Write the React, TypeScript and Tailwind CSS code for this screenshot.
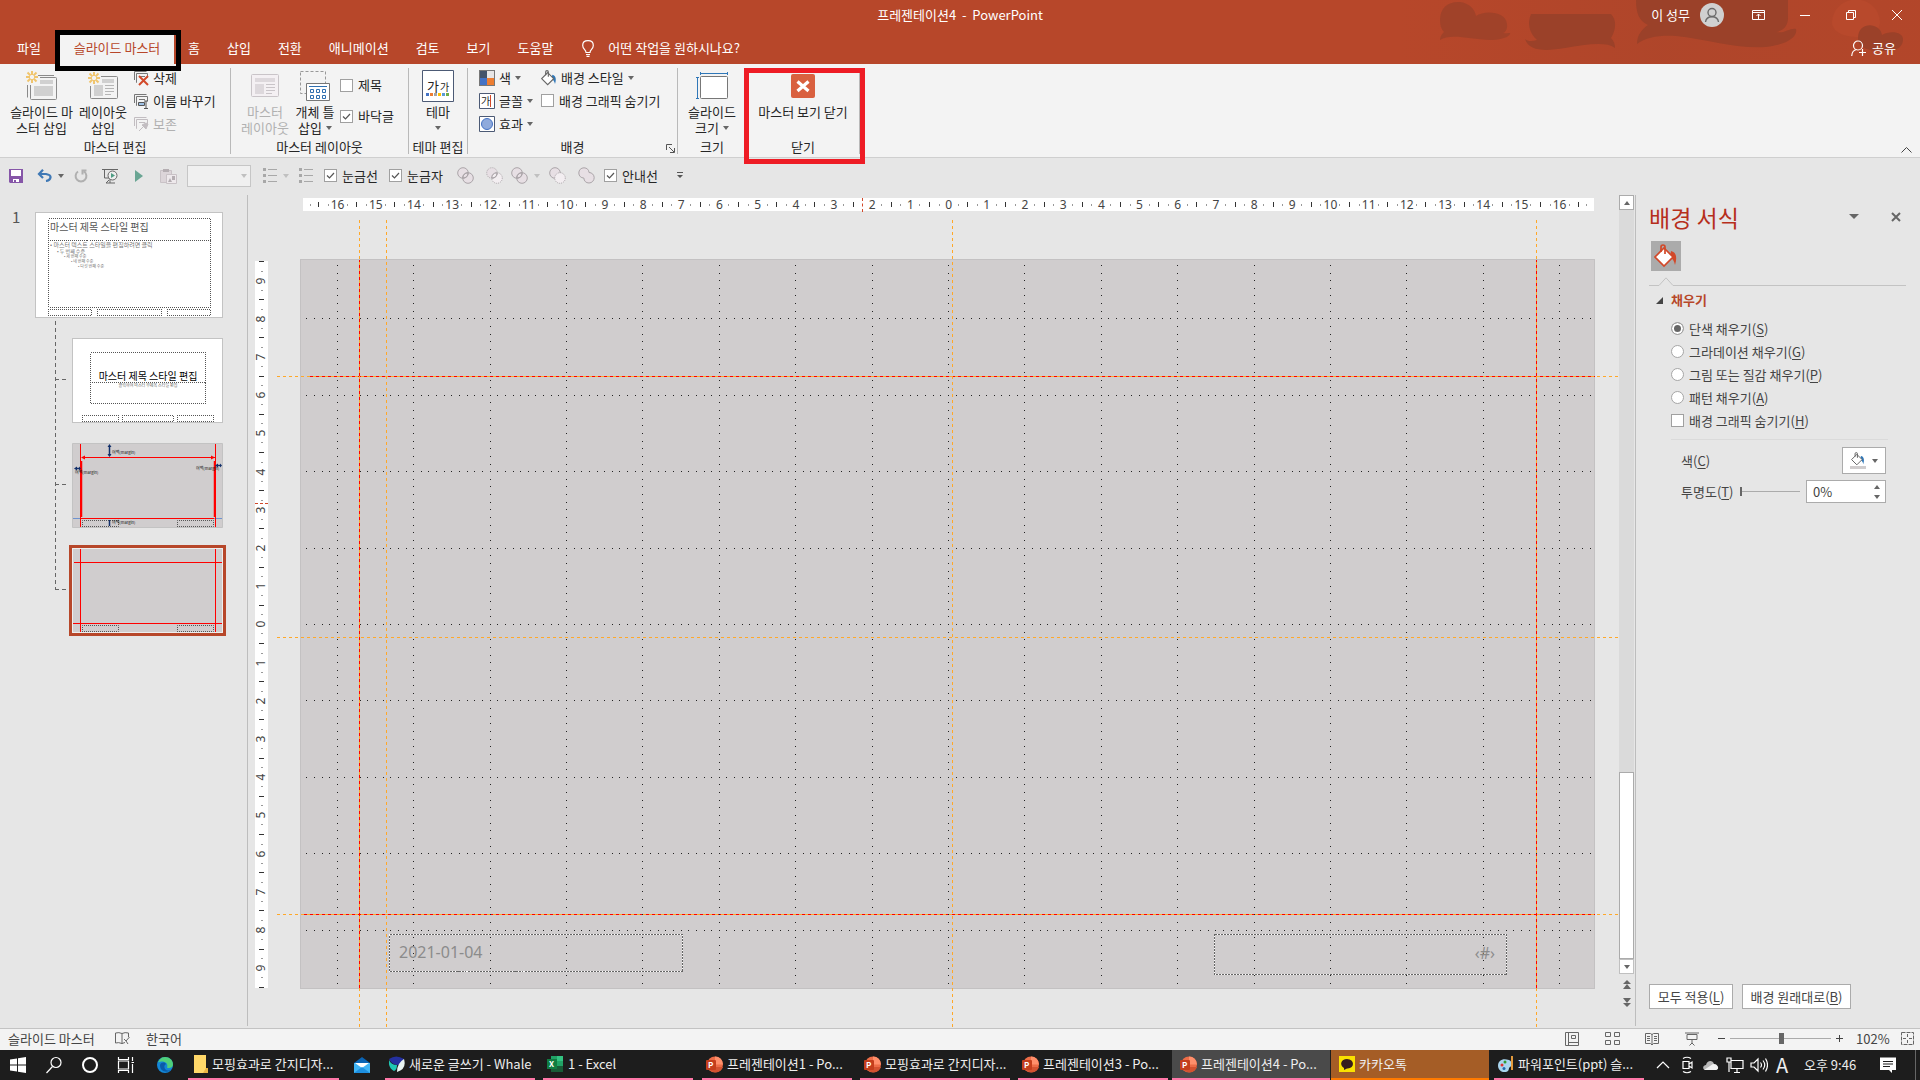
import React from 'react';
import clsx from 'clsx';

type Kids = { children?: React.ReactNode };

/* ---------- Small shared pieces ---------- */

function Caret({ className = 'text-[#666]' }: { className?: string }) {
  return (
    <svg width="6" height="4" viewBox="0 0 6 4" className={clsx('shrink-0', className)}>
      <path d="M0 0h6L3 4z" fill="currentColor" />
    </svg>
  );
}

function Check({ label, checked, className }: { label: React.ReactNode; checked?: boolean; className?: string }) {
  return (
    <label className={clsx('flex items-center gap-[5px] whitespace-nowrap', className)}>
      <span className="grid shrink-0">
        <input
          type="checkbox"
          defaultChecked={checked}
          className="peer col-start-1 row-start-1 h-[13px] w-[13px] appearance-none border border-[#a0a0a0] bg-white"
        />
        <svg viewBox="0 0 13 13" className="pointer-events-none col-start-1 row-start-1 hidden h-[13px] w-[13px] peer-checked:block">
          <path d="M3 6.5l2.5 2.5L10 4" fill="none" stroke="#555" strokeWidth="1.2" />
        </svg>
      </span>
      {label}
    </label>
  );
}

function Key({ k }: { k: string }) {
  return <>(<span className="underline underline-offset-2">{k}</span>)</>;
}

/* ---------- Title bar and tabs ---------- */

function HeaderArt() {
  return (
    <svg className="pointer-events-none absolute top-0 right-0" width="520" height="64" viewBox="0 0 520 64" fill="#9b4129">
      <defs>
        <linearGradient id="haze" x1="0" x2="1">
          <stop offset="0" stopColor="#a8442a" stopOpacity="0" />
          <stop offset="0.5" stopColor="#a8442a" stopOpacity="0.5" />
          <stop offset="1" stopColor="#a8442a" stopOpacity="0.3" />
        </linearGradient>
      </defs>
      <path d="M0 0h520v64H0z" fill="url(#haze)" />
      <path d="M40 20c0-13 9-19 20-18 9 1 15 7 16 14 8-6 30-5 31 8 1 6-3 9-4 9 5 1 8-1 7 1-2 4-12 6-20 6-20-1-40-7-50 0 0-5 4-8 4-8-3-3-4-7-4-12z" opacity=".8" />
      <path d="M131 14h80c6 6 5 16 0 24 3 3 4 6 4 10-10-7-30-3-50 0-18 3-36 4-40-9 3 3 8 2 12 1-8-7-10-17-6-26z" />
      <path d="M236 0h152v18c0 8-5 13-12 14 8 2 15-5 20-3 2 8-10 16-30 18-30 2-60-8-90-11-16-1-30 1-39 8 0-9 5-15 11-19-9-4-12-12-12-25z" />
      <path d="M432 22c2-30 46-30 48 0-1 12-10 15-22 15-14 0-26-5-26-15z" fill="#b8492c" />
      <path d="M458 38c0-17 22-16 24-3 8-5 22-3 21 5-1 11-12 11-22 11-12 0-23-3-23-13z" />
    </svg>
  );
}

function WinButton({ label, children }: Kids & { label: string }) {
  return (
    <button aria-label={label} className="flex h-[30px] w-[46px] items-center justify-center">
      <svg width="14" height="14" viewBox="0 0 14 14" fill="none" stroke="white">{children}</svg>
    </button>
  );
}

function TitleBar() {
  return (
    <header className="relative bg-[#b7472a] text-white">
      <HeaderArt />
      <div className="relative grid h-[30px] grid-cols-[1fr_auto_1fr] items-center">
        <span />
        <h1 className="text-[13px]">프레젠테이션4&nbsp; - &nbsp;PowerPoint</h1>
        <div className="flex items-center justify-end">
          <span className="mr-[10px]">이 성무</span>
          <svg width="24" height="24" viewBox="0 0 24 24" className="mr-3" fill="none" stroke="#6a6a6a" strokeWidth="1.4">
            <circle cx="12" cy="12" r="12" fill="#d0d0d0" stroke="none" />
            <circle cx="12" cy="9.500" r="4" />
            <path d="M5.500 19c1-7 12-7 13 0" />
          </svg>
          <WinButton label="리본 메뉴 표시 옵션">
            <path d="M.5 2.500h12v9H.5zM.5 4.500h12M6.500 11V6M4.500 8l2-2 2 2" />
          </WinButton>
          <WinButton label="최소화"><path d="M2 7.500h10" /></WinButton>
          <WinButton label="이전 크기로"><path d="M2.500 4.500h7v7h-7zM4.500 4V2.500h7v7H10" /></WinButton>
          <WinButton label="닫기"><path d="M2 2l10 10M12 2L2 12" /></WinButton>
        </div>
      </div>
      <nav className="relative flex h-[34px] items-end">
        <button className="h-[30px] w-[60px] pb-[2px] pl-[17px] text-left">파일</button>
        <div className="relative">
          <button className="h-[30px] w-[114px] bg-[#f3f3f3] pb-[2px] text-[#b7472a]">슬라이드 마스터</button>
          <div className="pointer-events-none absolute -top-1 -right-[7px] -bottom-[7px] -left-[5px] z-10 border-[5px] border-black" />
        </div>
        <div className="flex gap-px pl-px">
          {['홈', '삽입', '전환', '애니메이션', '검토', '보기', '도움말'].map((t) => (
            <button key={t} className="h-[30px] px-[13px] pb-[2px]">{t}</button>
          ))}
        </div>
        <button className="flex h-[30px] items-center gap-[14px] pb-[2px] pl-4">
          <svg width="12" height="17" viewBox="0 0 12 17" fill="none" stroke="white" strokeWidth="1.2">
            <path d="M4 12.500c0-3-3.300-3.500-3.300-7C.7 2.500 3 .7 6 .7s5.300 1.800 5.300 4.800c0 3.500-3.300 4-3.300 7zM4 14.500h4M4.500 16.300h3" />
          </svg>
          어떤 작업을 원하시나요?
        </button>
        <button className="mr-6 ml-auto flex h-[30px] items-center gap-[6px] pb-[2px]">
          <svg width="15" height="17" viewBox="0 0 15 17" fill="none" stroke="white" strokeWidth="1.2">
            <circle cx="7" cy="5.500" r="4.500" />
            <path d="M.7 16c.3-4 2-6 4.800-6.500M11.500 9v7M8 12.500h7" />
          </svg>
          공유
        </button>
      </nav>
    </header>
  );
}

/* ---------- Ribbon ---------- */

function Group({ label, width, children, launcher, last }: Kids & { label: string; width: string; launcher?: boolean; last?: boolean }) {
  return (
    <section className={clsx('relative flex h-[86px] shrink-0 flex-col border-r border-[#b9b9b9]', width)}>
      <div className="flex h-[72px]">{children}</div>
      <h2 className="text-center leading-[14px]">{label}</h2>
      {launcher && (
        <button aria-label="배경 서식" className="absolute right-[2px] bottom-px">
          <svg width="9" height="9" viewBox="0 0 9 9" fill="none" stroke="#555">
            <path d="M.5 6V.5H6M3 3l5 5M8.500 4v4.500H4" />
          </svg>
        </button>
      )}
      {last && <div className="pointer-events-none absolute top-0 -right-[6px] -bottom-[10px] -left-[3px] border-[5px] border-[#ee1c25]" />}
    </section>
  );
}

function Big({ icon, lines, width, caret, muted }: { icon: React.ReactNode; lines: string[]; width: string; caret?: boolean; muted?: boolean }) {
  return (
    <button className={clsx('flex flex-col items-center leading-4 whitespace-nowrap', width, muted && 'text-[#b1b1b1]')}>
      <span className="flex h-9 items-center">{icon}</span>
      {lines.map((l, i) => (
        <span key={l} className="flex h-4 items-center gap-1">
          {l}
          {caret && i === lines.length - 1 && <Caret />}
        </span>
      ))}
    </button>
  );
}

function Small({ icon, label, caret, muted }: { icon: React.ReactNode; label: string; caret?: boolean; muted?: boolean }) {
  return (
    <button className={clsx('flex h-[21px] items-center gap-1 whitespace-nowrap', muted && 'text-[#b1b1b1]')}>
      {icon}
      {label}
      {caret && <Caret />}
    </button>
  );
}

const Spark = () => <path d="M6 0v4M6 8v4M0 6h4M8 6h4M1.500 1.500l3 3M7.500 7.500l3 3M10.500 1.500l-3 3M4.500 7.500l-3 3" stroke="#f0c56e" strokeWidth="2" />;

const InsertMasterIcon = () => (
  <svg width="32" height="30" viewBox="0 0 32 30" fill="none" stroke="#8a8a8a">
    <path d="M1.500 14v12.500M12 4.500h16M4.500 14v13.500q0 1 1 1h24q1 0 1-1v-20q0-1-1-1H14" />
    <path d="M14 9h13v4H14zM8 15h19v10H8z" fill="#d0d0d0" stroke="none" />
    <Spark />
  </svg>
);

const InsertLayoutIcon = () => (
  <svg width="30" height="28" viewBox="0 0 30 28" fill="none" stroke="#8a8a8a">
    <path d="M2.500 14v11.500q0 1 1 1h25q1 0 1-1v-20q0-1-1-1H13" />
    <path d="M14 7h12v4H14zM6 13h9v11H6z" fill="#d0d0d0" stroke="none" />
    <path d="M17 13.500h9M17 16.500h9M17 19.500h9M17 22.500h6" stroke="#b5b5b5" />
    <Spark />
  </svg>
);

const MasterLayoutIcon = () => (
  <svg width="28" height="24" viewBox="0 0 28 24" fill="none" stroke="#c9c4c8">
    <rect x=".5" y=".5" width="27" height="22" rx="1" fill="#f4f0f3" />
    <path d="M4 4h20v4H4zM4 10h9v10H4z" fill="#ddd8dc" stroke="none" />
    <path d="M15 10.500h9M15 13.500h9M15 16.500h9M15 19.500h6" />
  </svg>
);

const PlaceholderIcon = () => (
  <svg width="30" height="31" viewBox="0 0 30 31" fill="none">
    <path d="M.5.5h25v22H.5z" stroke="#999" strokeDasharray="3 2" />
    <path d="M6.500 12.500h23v17h-23z" fill="white" stroke="#777" />
    <path d="M9 15.500h18" stroke="#2f6fb0" />
    <path d="M10.500 18.500h3v3h-3zM16.500 18.500h3v3h-3zM22.500 18.500h3v3h-3zM10.500 24.500h3v3h-3zM16.500 24.500h3v3h-3zM22.500 24.500h3v3h-3z" stroke="#2f6fb0" />
  </svg>
);

const ThemeIcon = () => (
  <svg width="32" height="32" viewBox="0 0 32 32">
    <path d="M.5.500h31v31H.5z" fill="white" stroke="#4c5a75" />
    <text x="5" y="21" fontSize="13" fill="#222">가</text>
    <text x="18" y="21" fontSize="10" fill="#222">가</text>
    {['#4472c4', '#ed7d31', '#a5a5a5', '#ffc000', '#5b9bd5', '#70ad47'].map((c, i) => (
      <rect key={c} x={4 + i * 4} y="23" width="3" height="3" fill={c} />
    ))}
  </svg>
);

const SlideSizeIcon = () => (
  <svg width="32" height="28" viewBox="0 0 32 28" fill="none" stroke="#2f77b8">
    <path d="M4.500 1.500h27M4.500 0v3M31.500 0v3M1.500 5v22M0 5.500h3M0 26.500h3" />
    <rect x="4.500" y="4.500" width="27" height="22" rx="1" fill="white" stroke="#777" />
  </svg>
);

const CloseMasterIcon = () => (
  <svg width="24" height="24" viewBox="0 0 24 24">
    <rect width="24" height="24" rx="2" fill="#d9603f" />
    <path d="M6.500 7.500l11 9.500M17.500 7.500l-11 9.500" stroke="white" strokeWidth="3.200" />
  </svg>
);

function PageIcon({ kind }: { kind: 'delete' | 'rename' | 'keep' }) {
  const c = kind === 'keep' ? '#c2bdc1' : '#777';
  return (
    <svg width="15" height="16" viewBox="0 0 15 16" fill="none" stroke={c}>
      <path d="M.5 10V1.500h12M3 12.500h-.5v-9h11V8M5 6.500h6" />
      {kind === 'delete' && <path d="M5 6l9 9M14 6l-9 9" stroke="#d2492a" strokeWidth="2" />}
      {kind === 'rename' && <path d="M4.500 9.500h6v3h-6zM10 8h4M12 8v7M10 15.500h4" fill="#9ec0e4" stroke="#555" />}
      {kind === 'keep' && <path d="M5 15l4-4M8 9l4 4 2-5-2-1z" fill={c} />}
    </svg>
  );
}

const Bucket = ({ accent = '#2f77b8', line = '#666', size = 16 }) => (
  <svg width={size} height={size} viewBox="0 0 24 24" fill="none" stroke={line} strokeWidth="1.700">
    <path d="M17 7c6 1 6 8 4 14-1-4-2-6-5-8z" fill={accent} stroke="none" />
    <path d="M10 4l9 9-9 9-9-9z" fill="white" />
    <path d="M7 8V3q0-2 2-2t2 2v7" />
  </svg>
);

function Ribbon() {
  return (
    <div className="relative flex h-[94px] border-b border-[#cfcfcf] bg-[#f3f3f3] pt-1 text-[#262626]">
      <Group label="마스터 편집" width="w-[231px]">
        <Big width="ml-2 w-[67px]" icon={<InsertMasterIcon />} lines={['슬라이드 마', '스터 삽입']} />
        <Big width="w-[56px]" icon={<InsertLayoutIcon />} lines={['레이아웃', '삽입']} />
        <div className="-mt-px flex flex-col gap-[2px] pl-[3px]">
          <Small icon={<PageIcon kind="delete" />} label="삭제" />
          <Small icon={<PageIcon kind="rename" />} label="이름 바꾸기" />
          <Small icon={<PageIcon kind="keep" />} label="보존" muted />
        </div>
      </Group>
      <Group label="마스터 레이아웃" width="w-[178px]">
        <Big width="ml-[9px] w-[50px]" icon={<MasterLayoutIcon />} lines={['마스터', '레이아웃']} muted />
        <Big width="w-[50px]" icon={<PlaceholderIcon />} lines={['개체 틀', '삽입']} caret />
        <div className="flex flex-col pt-px">
          <Check label="제목" className="h-8" />
          <Check label="바닥글" checked className="h-[30px]" />
        </div>
      </Group>
      <Group label="테마 편집" width="w-[59px]">
        <Big width="w-full" icon={<ThemeIcon />} lines={['테마', '']} caret />
      </Group>
      <Group label="배경" width="w-[210px]" launcher>
        <div className="-mt-px ml-[11px] flex w-[62px] flex-col gap-[2px]">
          <Small
            label="색"
            caret
            icon={
              <svg width="16" height="16" viewBox="0 0 16 16">
                <path d="M0 0h16v16H0z" fill="#777" />
                <path d="M1 1h7v7H1z" fill="#44546a" />
                <path d="M8 1h7v7H8z" fill="#e7e6e6" />
                <path d="M1 8h7v7H1z" fill="#4472c4" />
                <path d="M8 8h7v7H8z" fill="#ed7d31" />
              </svg>
            }
          />
          <Small
            label="글꼴"
            caret
            icon={
              <svg width="16" height="16" viewBox="0 0 16 16">
                <path d="M.5.500h15v15H.5z" fill="white" stroke="#4c5a75" />
                <text x="2" y="12" fontSize="10" fill="#222">가</text>
                <path d="M11.500 2v12" stroke="#d2492a" />
              </svg>
            }
          />
          <Small
            label="효과"
            caret
            icon={
              <svg width="16" height="16" viewBox="0 0 16 16">
                <path d="M.5.500h15v15H.5z" fill="white" stroke="#4c5a75" />
                <circle cx="8" cy="8" r="5.500" fill="#8faadc" stroke="#4472c4" />
              </svg>
            }
          />
        </div>
        <div className="-mt-px flex flex-col gap-[2px]">
          <Small icon={<Bucket />} label="배경 스타일" caret />
          <Check label="배경 그래픽 숨기기" className="h-[21px]" />
        </div>
      </Group>
      <Group label="크기" width="w-[69px]">
        <Big width="w-full" icon={<SlideSizeIcon />} lines={['슬라이드', '크기']} caret />
      </Group>
      <Group label="닫기" width="w-[113px]" last>
        <Big width="w-full" icon={<CloseMasterIcon />} lines={['마스터 보기 닫기']} />
      </Group>
      <button aria-label="리본 메뉴 축소" className="mr-2 mb-1 ml-auto self-end">
        <svg width="11" height="6" viewBox="0 0 11 6" fill="none" stroke="#444"><path d="M.5 5.500l5-5 5 5" /></svg>
      </button>
    </div>
  );
}

/* ---------- Quick access bar ---------- */

function Tool({ label, width, children }: Kids & { label: string; width: string }) {
  return (
    <button aria-label={label} className={clsx('flex shrink-0 items-center gap-[6px]', width)}>{children}</button>
  );
}

function Rings({ kind }: { kind: number }) {
  return (
    <svg width="17" height="17" viewBox="0 0 17 17" fill="#e7dfe4" stroke="#aaa4a8">
      {kind === 3 ? (
        <path d="M6 .8C9 .8 11 3 11 5.500c3 0 5.200 2.500 5.200 5.200S14 16 11 16s-5-2-5.200-5C3 11 .8 9 .8 6S3 .8 6 .8z" />
      ) : (
        <>
          <circle cx="6" cy="6" r="5.300" strokeDasharray={kind === 1 ? '1 1' : undefined} />
          <circle cx="11" cy="11" r="5.300" strokeDasharray={kind ? '1 1' : undefined} fill={kind ? '#f3eef1' : '#e7dfe4'} />
          {kind < 2 && <path d="M11 5.700Q11 11 5.700 11Q6 6 11 5.700zM11.300 6A5.300 5.300 0 0 1 6 11.300" fill="none" />}
        </>
      )}
    </svg>
  );
}

const ListIcon = () => (
  <svg width="14" height="15" viewBox="0 0 14 15" stroke="#a8a8a8">
    <path d="M5 1.500h9M5 7.500h9M5 13.500h9" />
    <path d="M0 1.500h3M0 7.500h3M0 13.500h3" strokeWidth="3" />
  </svg>
);

function QuickBar() {
  return (
    <div className="flex h-[37px] items-center pb-[2px] pl-[9px] text-[#262626]">
      <Tool label="저장" width="w-[28px]">
        <svg width="14" height="14" viewBox="0 0 14 14">
          <path d="M0 0h14v14H1l-1-1z" fill="#8656a8" />
          <path d="M2 1h10v6H2zM4 10h6v3H7v-2H5v2H4z" fill="white" />
        </svg>
      </Tool>
      <Tool label="실행 취소" width="w-[37px]">
        <svg width="15" height="13" viewBox="0 0 15 13" fill="none" stroke="#3f78b5" strokeWidth="2.200">
          <path d="M6 .8L2 5l4 4M2 5h7q5 1 4.500 3.500-.5 3-4.500 3.500" />
        </svg>
        <Caret />
      </Tool>
      <Tool label="다시 실행" width="w-[28px]">
        <svg width="14" height="14" viewBox="0 0 14 14" fill="none" stroke="#b0b0b0" strokeWidth="2">
          <path d="M4 2.500A5.400 5.400 0 1 0 10 2.500M8.500 5.500V1.500h4" />
        </svg>
      </Tool>
      <Tool label="슬라이드 쇼" width="w-[33px]">
        <svg width="17" height="16" viewBox="0 0 17 16" fill="none" stroke="#666">
          <path d="M0 1.500h16M2.500 2v8H7M7 12l-3 3h9M8 10v5" />
          <circle cx="10.500" cy="7.500" r="4.500" fill="#eee" />
          <path d="M9 5l4 2.500L9 10z" fill="#4f9c84" stroke="none" />
        </svg>
      </Tool>
      <Tool label="재생" width="w-[25px]">
        <svg width="8" height="12" viewBox="0 0 8 12"><path d="M0 0l8 6-8 6z" fill="#69a593" /></svg>
      </Tool>
      <Tool label="붙여넣기" width="w-[27px]">
        <svg width="17" height="16" viewBox="0 0 17 16" fill="#dcd5d9" stroke="#c9c2c6">
          <path d="M.5 2.500h11v12H.5z" />
          <path d="M3 1h6v3H3z" fill="#b5aeb2" stroke="none" />
          <path d="M6.500 6.500h10v9h-10z" fill="#eee9ec" />
          <path d="M8 14l2-4 2 4zM12 8h3v4h-3z" fill="#b5aeb2" stroke="none" />
        </svg>
      </Tool>
      <div className="mr-3 grid shrink-0 items-center">
        <select aria-label="글꼴 크기" className="col-start-1 row-start-1 h-[22px] w-16 appearance-none border border-[#c6c6c6] bg-[#f0f0f0]" />
        <Caret className="pointer-events-none col-start-1 row-start-1 mr-1 justify-self-end text-[#c0c0c0]" />
      </div>
      <Tool label="글머리 기호" width="w-[36px]"><ListIcon /><Caret className="text-[#c0c0c0]" /></Tool>
      <Tool label="목록" width="w-[25px]"><ListIcon /></Tool>
      <Check label="눈금선" checked className="w-[65px]" />
      <Check label="눈금자" checked className="w-[68px]" />
      <Tool label="도형 병합" width="w-[29px]"><Rings kind={0} /></Tool>
      <Tool label="도형 교차" width="w-[25px]"><Rings kind={1} /></Tool>
      <Tool label="도형 결합" width="w-[38px]"><Rings kind={0} /><Caret className="text-[#c0c0c0]" /></Tool>
      <Tool label="도형 빼기" width="w-[29px]"><Rings kind={2} /></Tool>
      <Tool label="도형 통합" width="w-[26px]"><Rings kind={3} /></Tool>
      <Check label="안내선" checked className="w-[73px]" />
      <button aria-label="빠른 실행 도구 모음 사용자 지정">
        <svg width="6" height="7" viewBox="0 0 6 7" fill="#555"><path d="M0 0h6v1H0zM0 3h6L3 6z" /></svg>
      </button>
    </div>
  );
}

/* ---------- Thumbnails ---------- */

const dotted = { fill: 'none', stroke: '#555', strokeDasharray: '1 1' };

function Margin({ x, y }: { x: number; y: number }) {
  return <text x={x} y={y} fontSize="4" fill="#111">여백(margin)</text>;
}

function Thumbnails() {
  return (
    <aside className="mb-[2px] flex w-[248px] shrink-0 border-r border-[#bdbdbd] pt-[17px]">
      <span className="w-[35px] shrink-0 pl-3 text-[15px] leading-[10px] text-[#555]">1</span>
      <div>
        <button aria-label="슬라이드 마스터" className="block">
          <svg width="188" height="106" viewBox="0 0 188 106" shapeRendering="crispEdges">
            <path d="M.5.500h187v105H.5z" fill="white" stroke="#c3c3c3" />
            <path d="M13.500 6.500h162v22h-162zM13.500 28v67h162V28M13.500 104V97.500h43v6h-43M62.500 104V97.500h64v6h-64M132.500 104V97.500h43v6h-43" {...dotted} />
            <text x="15" y="19" fontSize="10" fill="#555">마스터 제목 스타일 편집</text>
            <g fill="#777" fontSize="6">
              <text x="15" y="35">• 마스터 텍스트 스타일을 편집하려면 클릭</text>
              <text x="22" y="41" fontSize="5">• 두 번째 수준</text>
              <text x="29" y="46" fontSize="4">• 세 번째 수준</text>
              <text x="36" y="51" fontSize="4">• 네 번째 수준</text>
              <text x="43" y="56" fontSize="4">• 다섯 번째 수준</text>
            </g>
          </svg>
        </button>
        <div className="flex pt-[3px] pl-5">
          <svg width="14" height="270" viewBox="0 0 14 270" fill="none" stroke="#666" strokeDasharray="4 3" shapeRendering="crispEdges" className="shrink-0">
            <path d="M.5 0v268M0 58.500h14M0 163.500h14M0 268.500h14" />
          </svg>
          <div className="flex flex-col items-center pt-[17px]">
            <button aria-label="제목 슬라이드 레이아웃" className="mb-5">
              <svg width="151" height="85" viewBox="0 0 151 85" className="block" shapeRendering="crispEdges">
                <path d="M.5.500h150v84H.5z" fill="white" stroke="#c3c3c3" />
                <path d="M18.500 14.500h115v30h-115zM18.500 44v21.500h115V44M10.500 84V77.500h36v6h-36M50.500 84V77.500h51v6h-51M105.500 84V77.500h36v6h-36" {...dotted} />
                <text x="76" y="42" fontSize="10" fill="#000" textAnchor="middle">마스터 제목 스타일 편집</text>
                <text x="76" y="49" fontSize="4" fill="#666" textAnchor="middle">클릭하여 마스터 부제목 스타일 편집</text>
              </svg>
            </button>
            <button aria-label="여백 안내 레이아웃" className="mb-[17px]">
              <svg width="151" height="85" viewBox="0 0 151 85" className="block">
                <path d="M.5.500h150v84H.5z" fill="#d0cdce" stroke="#c3c3c3" />
                <path d="M1 75.500h149" stroke="#6f93cf" />
                <path d="M10.500 84V77.500h36v6h-36M105.500 84V77.500h36v6h-36" {...dotted} />
                <path d="M8.500 1v83M143.500 1v83M10 14.500h133M9 75.500h133" stroke="#f00" />
                <path d="M9.500 18v56M142.500 18v56" stroke="#f00" strokeWidth="1.500" />
                <path d="M9 14.500l4-2v4zM143 14.500l-4-2v4z" fill="#f00" />
                <path d="M37.500 3v10M37.500 77v6M4 25.500h3M146 22.500h3" stroke="#12306b" strokeWidth="1.500" />
                <path d="M35.500 4l2-3 2 3zM35.500 11l2 3 2-3zM5 23.500l-3 2 3 2zM7 23.500l2 2-2 2zM146 20.500l-3 2 3 2zM148 20.500l2 2-2 2z" fill="#12306b" />
                <Margin x={40} y={11} />
                <Margin x={3} y={31} />
                <Margin x={124} y={27} />
                <Margin x={40} y={81} />
              </svg>
            </button>
            <button aria-label="선택한 레이아웃" aria-current="true" className="border-[3px] border-[#b7472a]">
              <svg width="151" height="85" viewBox="0 0 151 85" className="block">
                <path d="M.5.500h150v84H.5z" fill="#d0cdce" stroke="#eee" />
                <path d="M10.500 84V77.500h36v6h-36M105.500 84V77.500h36v6h-36" {...dotted} />
                <path d="M8.500 1v83M143.500 1v83M2 14.500h148M1 75.500h149" stroke="#f00" />
              </svg>
            </button>
          </div>
        </div>
      </div>
    </aside>
  );
}

/* ---------- Rulers and slide ---------- */

const range = (n: number) => Array.from({ length: n * 2 + 1 }, (_, i) => i - n);

function Ruler({ size, vertical }: { size: number; vertical?: boolean }) {
  const dot = <i className={clsx('shrink-0 bg-[#999]', vertical ? 'h-px w-[2px]' : 'h-[2px] w-px')} />;
  const tick = <i className={clsx('shrink-0 bg-[#333]', vertical ? 'h-px w-[5px]' : 'h-[5px] w-px')} />;
  return (
    <div
      className={clsx(
        "flex items-center bg-white font-['Noto_Sans',sans-serif] text-[12px] text-[#444]",
        vertical ? 'w-[13px] flex-col' : 'h-[13px] w-full',
      )}
    >
      {!vertical && <span className="flex w-[15px] shrink-0 justify-center">{dot}</span>}
      {tick}
      {range(size).map((n) => (
        <React.Fragment key={n}>
          <span className={clsx('flex min-h-0 min-w-0 flex-1 items-center justify-center', vertical && 'flex-col')}>
            {dot}
            <span className={clsx('flex shrink-0 items-center justify-center leading-3', vertical ? 'h-[18px] -rotate-90' : 'w-[18px]')}>
              {Math.abs(n)}
            </span>
            {dot}
          </span>
          {tick}
        </React.Fragment>
      ))}
      {!vertical && <span className="flex w-[15px] shrink-0 justify-center">{dot}</span>}
    </div>
  );
}

// Grid lines every 2 cm, one dot every 2 mm
const STEP = 7.64;
const CX = 671;
const CY = 404;

const gridPath = () => {
  const d: string[] = [];
  const dot = (i: number, j: number) => d.push(`M${Math.round(CX + i * STEP)} ${Math.round(CY + j * STEP)}h1v1h-1z`);
  range(8).forEach((c) => range(47).forEach((j) => dot(c * 10, j)));
  range(4).forEach((r) => range(84).forEach((i) => dot(i, r * 10)));
  return d.join('');
};

function Slide() {
  return (
    <svg viewBox="0 0 1341 808" className="block h-auto w-full min-w-0 flex-1">
      <g shapeRendering="crispEdges" fill="none">
        <path d="M23.500 39.500h1294v729H23.500z" fill="#d0cdce" stroke="#c3c1c2" />
        <path d="M82.500 40v728M1259.500 40v728M32 156.500h1286M26 694.500h1292" stroke="#f00" />
        <path d={gridPath()} fill="#222" />
        <path d="M82.500 0v808M109.500 0v808M675.500 0v808M1259.500 0v808M0 156.500h1341M0 417.500h1341M0 694.500h1341" stroke="#ffa829" strokeDasharray="3 3" />
        <g stroke="#fff">
          <path d="M112.500 714.500h293v37h-293zM937.500 714.500h292v40h-292z" />
          <path d="M112.500 714.500h293v37h-293zM937.500 714.500h292v40h-292z" stroke="#666" strokeDasharray="2 1" />
        </g>
      </g>
      <g fontSize="16" fill="#8b8b8b" fontFamily="'Noto Sans', sans-serif">
        <text x="122" y="738">2021-01-04</text>
        <text x="1218" y="739" textAnchor="end">‹#›</text>
      </g>
    </svg>
  );
}

function Workspace() {
  return (
    <section className="min-w-0 flex-1 pt-[3px]">
      <div className="relative mr-[25px] ml-[55px]">
        <Ruler size={16} />
        <i className="absolute top-0 left-[559px] h-[14px] border-l border-dashed border-[#d2492a]" />
      </div>
      <div className="flex gap-[9px] pt-[9px] pr-px pl-[7px]">
        <div className="relative flex pt-[41px] pb-10">
          <Ruler size={9} vertical />
          <i className="absolute top-[283px] left-0 w-[13px] border-t border-dashed border-[#d2492a]" />
        </div>
        <Slide />
      </div>
    </section>
  );
}

function ScrollBar() {
  return (
    <div className="flex w-4 shrink-0 flex-col items-start">
      <button aria-label="위로" className="flex h-[15px] w-[15px] items-center justify-center border border-[#ababab] bg-white">
        <Caret className="rotate-180 text-[#666]" />
      </button>
      <div className="flex w-[15px] flex-1 flex-col justify-end bg-[#dadada]">
        <div className="h-[187px] border border-[#ababab] bg-white" />
      </div>
      <button aria-label="아래로" className="flex h-[15px] w-[15px] items-center justify-center border border-[#c0c0c0] bg-white"><Caret /></button>
      <div className="mb-[21px] flex w-[15px] flex-col items-center gap-[9px] pt-[6px]">
        {['이전 슬라이드', '다음 슬라이드'].map((l, i) => (
          <button key={l} aria-label={l} className="h-[9px]">
            <svg width="8" height="9" viewBox="0 0 8 9" fill="#666" className={clsx('block', i === 1 && 'rotate-180')}>
              <path d="M4 0l4 4H0zM4 4l4 5H0z" />
            </svg>
          </button>
        ))}
      </div>
    </div>
  );
}

/* ---------- Format pane ---------- */

const fills = [
  ['단색 채우기', 'S'],
  ['그라데이션 채우기', 'G'],
  ['그림 또는 질감 채우기', 'P'],
  ['패턴 채우기', 'A'],
];

function FormatPane() {
  return (
    <aside className="mb-[2px] flex w-[285px] shrink-0 flex-col border-l border-[#bdbdbd] pl-[13px] text-[#444]">
      <div className="flex h-[43px] items-center pr-[19px]">
        <h2 className="flex-1 text-[23px] leading-[40px] text-[#b62f1c]">배경 서식</h2>
        <button aria-label="작업창 옵션" className="mr-8">
          <svg width="10" height="5" viewBox="0 0 10 5" fill="#666"><path d="M0 0h10L5 5z" /></svg>
        </button>
        <button aria-label="닫기">
          <svg width="10" height="10" viewBox="0 0 10 10" stroke="#666" strokeWidth="2"><path d="M1 1l8 8M9 1L1 9" /></svg>
        </button>
      </div>
      <button aria-label="채우기" className="mt-[3px] ml-[2px] flex h-[30px] w-[30px] items-center justify-center bg-[#ababab]">
        <Bucket accent="#d2492a" line="#d2492a" size={24} />
      </button>
      <div className="mt-[6px] mr-[14px] flex h-[9px] items-end">
        <i className="h-px w-[10px] bg-[#c3c3c3]" />
        <svg width="14" height="9" viewBox="0 0 14 9" fill="none" stroke="#c3c3c3"><path d="M0 8.500L7 .8l7 7.700" /></svg>
        <i className="h-px flex-1 bg-[#c3c3c3]" />
      </div>
      <h3 className="mt-1 flex h-5 items-center gap-2 pl-[7px] font-bold text-[#b7472a]">
        <svg width="7" height="7" viewBox="0 0 7 7" fill="#444"><path d="M7 0v7H0z" /></svg>
        채우기
      </h3>
      <div className="mt-[7px] mr-8 ml-[22px] flex flex-col border-b border-[#dadada] pb-[7px]">
        {fills.map(([t, k], i) => (
          <label key={k} className="flex h-[23px] items-center gap-[5px]">
            <input
              type="radio"
              name="fill"
              defaultChecked={i === 0}
              className="h-[13px] w-[13px] appearance-none rounded-full border border-[#a6a6a6] bg-white checked:bg-[#666] checked:shadow-[inset_0_0_0_2px_white]"
            />
            <span>{t}<Key k={k} /></span>
          </label>
        ))}
        <Check className="h-[23px]" label={<span>배경 그래픽 숨기기<Key k="H" /></span>} />
      </div>
      <div className="mt-[7px] mr-[34px] flex h-[27px] items-center justify-between pl-8">
        <span>색<Key k="C" /></span>
        <button aria-label="색" className="flex h-[27px] w-11 items-center justify-center gap-[6px] border border-[#ababab] bg-white">
          <span className="flex flex-col items-center">
            <Bucket size={14} />
            <i className="h-[3px] w-4 bg-[#d0cdce]" />
          </span>
          <Caret />
        </button>
      </div>
      <div className="mt-[6px] mr-[34px] flex h-[23px] items-center pl-8">
        <label htmlFor="alpha" className="w-[59px] whitespace-nowrap">투명도<Key k="T" /></label>
        <input
          id="alpha"
          type="range"
          defaultValue={0}
          className="h-[10px] w-[60px] appearance-none bg-transparent [&::-webkit-slider-runnable-track]:h-px [&::-webkit-slider-runnable-track]:bg-[#ababab] [&::-webkit-slider-thumb]:-mt-1 [&::-webkit-slider-thumb]:h-[9px] [&::-webkit-slider-thumb]:w-[2px] [&::-webkit-slider-thumb]:appearance-none [&::-webkit-slider-thumb]:bg-[#666]"
        />
        <div className="ml-auto flex h-[23px] w-20 items-center border border-[#ababab] bg-white pr-[5px]">
          <input aria-label="투명도 값" defaultValue="0%" className="w-full min-w-0 bg-transparent pl-[6px] outline-none" />
          <span className="flex flex-col gap-[6px]">
            <Caret className="rotate-180 text-[#666]" />
            <Caret />
          </span>
        </div>
      </div>
      <div className="mt-auto mb-[17px] flex gap-[9px]">
        <button className="h-[25px] w-[84px] border border-[#ababab] bg-white">모두 적용<Key k="L" /></button>
        <button className="h-[25px] w-[109px] border border-[#ababab] bg-white">배경 원래대로<Key k="B" /></button>
      </div>
    </aside>
  );
}

/* ---------- Status bar ---------- */

function ViewButton({ label, d }: { label: string; d: string }) {
  return (
    <button aria-label={label} className="w-10">
      <svg width="15" height="14" viewBox="0 0 15 14" fill="none" stroke="#666"><path d={d} /></svg>
    </button>
  );
}

function StatusBar() {
  return (
    <footer className="flex h-[22px] items-center border-t border-[#c3c3c3] bg-[#f3f3f3] pb-[2px] pl-2 text-[#444]">
      <span className="w-[107px]">슬라이드 마스터</span>
      <button aria-label="맞춤법 검사" className="w-[31px]">
        <svg width="15" height="13" viewBox="0 0 15 13" fill="none" stroke="#666">
          <path d="M7 12V1.500M7 1.500Q4 0 .5 1v10q3-1 6.500.5M7 1.500q3-1.500 6.500-.5v4M7 11.500l3-1M9 7l2 2 3.500-4M11 9l2 3" />
        </svg>
      </button>
      <span className="flex-1">한국어</span>
      <ViewButton label="기본" d="M.5.500h13v13H.5zM3.500 1v12M3.500 10.500h10M6.500 3.500h4v3h-4z" />
      <ViewButton label="여러 슬라이드" d="M.5.500h5v4h-5zM9.500.500h5v4h-5zM.5 8.500h5v4h-5zM9.500 8.500h5v4h-5z" />
      <ViewButton label="읽기용 보기" d="M.5 1.500h5l1.500 1 1.500-1h5v10h-5L7 13l-1.500-1.500h-5zM7 2v11M2 4.500h3M2 6.500h3M2 8.500h3M9 4.500h3M9 6.500h3M9 8.500h3" />
      <button aria-label="슬라이드 쇼" className="w-[33px]">
        <svg width="15" height="14" viewBox="0 0 15 14" fill="none" stroke="#666"><path d="M0 1h14M2 2.500v5h10v-5zM7 8v4M4.500 13.500L7 11l2.500 2.500" /></svg>
      </button>
      <button aria-label="축소" className="h-px w-[7px] bg-[#444]" />
      <input
        type="range"
        aria-label="확대/축소"
        defaultValue={51}
        className="mx-[5px] h-3 w-[101px] appearance-none bg-transparent [&::-webkit-slider-runnable-track]:h-px [&::-webkit-slider-runnable-track]:bg-[#ababab] [&::-webkit-slider-thumb]:-mt-[5px] [&::-webkit-slider-thumb]:h-[11px] [&::-webkit-slider-thumb]:w-[5px] [&::-webkit-slider-thumb]:appearance-none [&::-webkit-slider-thumb]:bg-[#666]"
      />
      <button aria-label="확대" className="w-5">
        <svg width="8" height="8" viewBox="0 0 8 8" stroke="#444"><path d="M0 3.500h7M3.500 0v7" /></svg>
      </button>
      <span className="w-[45px]">102%</span>
      <button aria-label="창 크기에 맞춤" className="mr-[6px]">
        <svg width="13" height="13" viewBox="0 0 13 13" fill="none" stroke="#666">
          <path d="M.5.500h12v12H.5z" strokeDasharray="4 1" />
          <path d="M6.500 2v3M6.500 8v3M2 6.500h3M8 6.500h3" />
        </svg>
      </button>
    </footer>
  );
}

/* ---------- Windows taskbar ---------- */

const PptIcon = () => (
  <svg width="17" height="17" viewBox="0 0 17 17">
    <circle cx="9" cy="8.500" r="8" fill="#ed6c47" />
    <path d="M9 .5a8 8 0 0 1 8 8H9z" fill="#ff8f6b" />
    <path d="M2 11h15a8 8 0 0 1-14 2z" fill="#d35230" />
    <rect y="4" width="10" height="10" rx="1" fill="#c43e1c" />
    <text x="2" y="12" fontSize="8" fontWeight="700" fill="white">P</text>
  </svg>
);

function Task({ icon, label, className = 'ml-2 w-[150px] border-[#ff77a8] pl-1' }: { icon: React.ReactNode; label: string; className?: string }) {
  return (
    <button className={clsx('flex h-[30px] shrink-0 items-center gap-1 border-b-2 whitespace-nowrap', className)}>
      {icon}
      {label}
    </button>
  );
}

function Sys({ label, width = 'w-9', children }: Kids & { label: string; width?: string }) {
  return (
    <button aria-label={label} className={clsx('flex h-[30px] shrink-0 items-center justify-center', width)}>
      <svg width="18" height="18" viewBox="0 0 18 18" fill="none" stroke="white" strokeWidth="1.200">{children}</svg>
    </button>
  );
}

function Taskbar() {
  return (
    <nav className="flex h-[30px] items-center bg-[#1d1d1d] text-[#eee]">
      <Sys label="시작">
        <path d="M1 3.500l7-1V8.500H1zM9 2.300L17 1v7.500H9zM1 9.500h7v6l-7-1zM9 9.500h8V17l-8-1.200z" fill="white" stroke="none" />
      </Sys>
      <Sys label="검색"><circle cx="11" cy="6.500" r="5" /><path d="M7.500 10.500L1.500 17" /></Sys>
      <Sys label="Cortana"><circle cx="9" cy="9" r="7" strokeWidth="2" /></Sys>
      <Sys label="작업 보기"><path d="M1.500 5h10v8h-10zM1.500 1v2.500h10V1M1.500 17v-2.500h10V17M15.500 1v4M15.500 8v9M14.500 6.500h2.500" /></Sys>
      <Sys label="Edge" width="ml-[3px] w-9">
        <g stroke="none">
          <circle cx="9" cy="9" r="8" fill="#1386d6" />
          <path d="M6 1.500c6-2 11 2 11 7 0 4-5 4-6 3 1-3 0-5-4-6-2 0-4 0-5 1 1-2 2-4 4-5z" fill="#4fd07a" />
          <path d="M4 9c1-3 5-3 6-1-2 1-2 3-1 5 2 2 4 2 7 0-3 4-12 4-12-4z" fill="#0a5ba8" />
        </g>
      </Sys>
      <Task
        label="모핑효과로 간지디자..."
        className="ml-[5px] w-[151px] border-[#ff77a8] pl-[6px]"
        icon={<svg width="14" height="18" viewBox="0 0 14 18"><path d="M0 0h12v15h2v3H0z" fill="#ffd869" /><path d="M12 13h2v5H9z" fill="#eab543" /></svg>}
      />
      <Sys label="메일" width="ml-1 w-[38px]">
        <g stroke="none"><path d="M1 7l8-6 8 6z" fill="#0a64b4" /><path d="M1 7h16v10H1z" fill="#3fb4f5" /><path d="M2 7h14l-7 5z" fill="white" /><path d="M1 17l8-6 8 6z" fill="#1d8fe0" /></g>
      </Sys>
      <Task
        label="새로운 글쓰기 - Whale"
        className="ml-1 w-[150px] border-[#ff77a8] pl-1"
        icon={<svg width="16" height="16" viewBox="0 0 16 16"><path d="M0 3q7-5 15 0-3 6-7 6Q2 8 0 3z" fill="#2430a0" /><path d="M0 4q2 5 8 5 0 5-3 6Q-1 12 0 4z" fill="#1fc7b4" /><path d="M15 3q3 10-7 13 0-9 7-13z" fill="#e8f4f2" /></svg>}
      />
      <Task
        label="1 - Excel"
        icon={<svg width="17" height="16" viewBox="0 0 17 16"><path d="M4 0h12v16H4z" fill="#21a366" /><path d="M10 0h6v5h-6z" fill="#33c481" /><path d="M4 10h12v6H4z" fill="#185c37" /><path d="M0 3h10v10H0z" fill="#107c41" /><text x="2" y="11" fontSize="8" fontWeight="700" fill="white">X</text></svg>}
      />
      <Task icon={<PptIcon />} label="프레젠테이션1 - Po..." className="ml-[9px] w-[150px] border-[#ff77a8] pl-1" />
      <Task icon={<PptIcon />} label="모핑효과로 간지디자..." />
      <Task icon={<PptIcon />} label="프레젠테이션3 - Po..." />
      <Task icon={<PptIcon />} label="프레젠테이션4 - Po..." className="ml-1 w-[158px] border-[#ff77a8] bg-[#4a4a4a] pl-2" />
      <Task
        label="카카오톡"
        className="ml-px w-[158px] border-[#ff7a00] bg-[#a55d26] pl-2"
        icon={<svg width="16" height="16" viewBox="0 0 16 16"><path d="M0 0h16v16H0z" fill="#fae100" /><path d="M8 3c8 0 8 10 0 9.500L5 14v-2C0 9 2 3 8 3z" fill="#371d1e" /></svg>}
      />
      <Task
        label="파워포인트(ppt) 슬..."
        className="ml-[5px] w-[150px] border-[#ff77a8] pl-1"
        icon={<svg width="16" height="16" viewBox="0 0 16 16"><path d="M0 10C0 4 5 2 11 4c4 2 3 6 1 7s0 4-4 5-8-2-8-6z" fill="#a9d5ee" /><circle cx="4" cy="9" r="1.500" fill="#d33" /><circle cx="7" cy="6" r="1.500" fill="#393" /><circle cx="6" cy="12.500" r="1.500" fill="#26a" /><path d="M13 0h2v14h-2z" fill="#e39a3c" /></svg>}
      />
      <div className="ml-auto flex items-center">
        <Sys label="숨겨진 아이콘 표시" width="w-6"><path d="M3 12l6-6 6 6" /></Sys>
        <Sys label="카메라" width="w-6"><path d="M5 5.500h6v7H5zM11 8l3-2v6l-3-2M5 2.500q4-2.500 8 0M5 15.500q4 2.500 8 0" /></Sys>
        <Sys label="OneDrive" width="w-6">
          <g stroke="none">
            <path d="M3 14c-3-1-2-5 1-5 1-5 7-5 8-1 4 0 5 5 2 6z" fill="#b9b9b9" />
            <path d="M2 14l9-6c5 0 7 5 3 6z" fill="#f2f2f2" />
          </g>
        </Sys>
        <Sys label="네트워크" width="w-6"><path d="M5 4.500h12v8H5zM11 13v3M8 16.500h6M1 2h4v4H1zM3 6v10" /></Sys>
        <Sys label="볼륨" width="w-[23px]"><path d="M1 7h3l4-4v12l-4-4H1zM10.500 6.500q2 2.500 0 5M13 4.500q3.500 4.500 0 9M15.500 2.500q4 6.500 0 13" /></Sys>
        <button className="w-6 text-[20px] leading-[30px]">A</button>
        <time className="ml-[10px] w-[75px] whitespace-nowrap">오후 9:46</time>
        <Sys label="알림" width="mr-[18px] w-[18px]"><path d="M1 1.500h16V14h-4v3l-3-3H1z" fill="white" stroke="none" /><path d="M4 5.500h10M4 8h10M4 10.500h7" stroke="#1d1d1d" /></Sys>
        <i className="mr-1 h-[30px] w-px bg-[#666]" />
      </div>
    </nav>
  );
}

export default function App() {
  return (
    <div className="flex min-h-screen flex-col overflow-x-hidden bg-[#e6e6e6] font-['Noto_Sans_CJK_KR',sans-serif] text-[13px] leading-4">
      <TitleBar />
      <Ribbon />
      <QuickBar />
      <main className="flex flex-1">
        <Thumbnails />
        <Workspace />
        <ScrollBar />
        <FormatPane />
      </main>
      <StatusBar />
      <Taskbar />
    </div>
  );
}
